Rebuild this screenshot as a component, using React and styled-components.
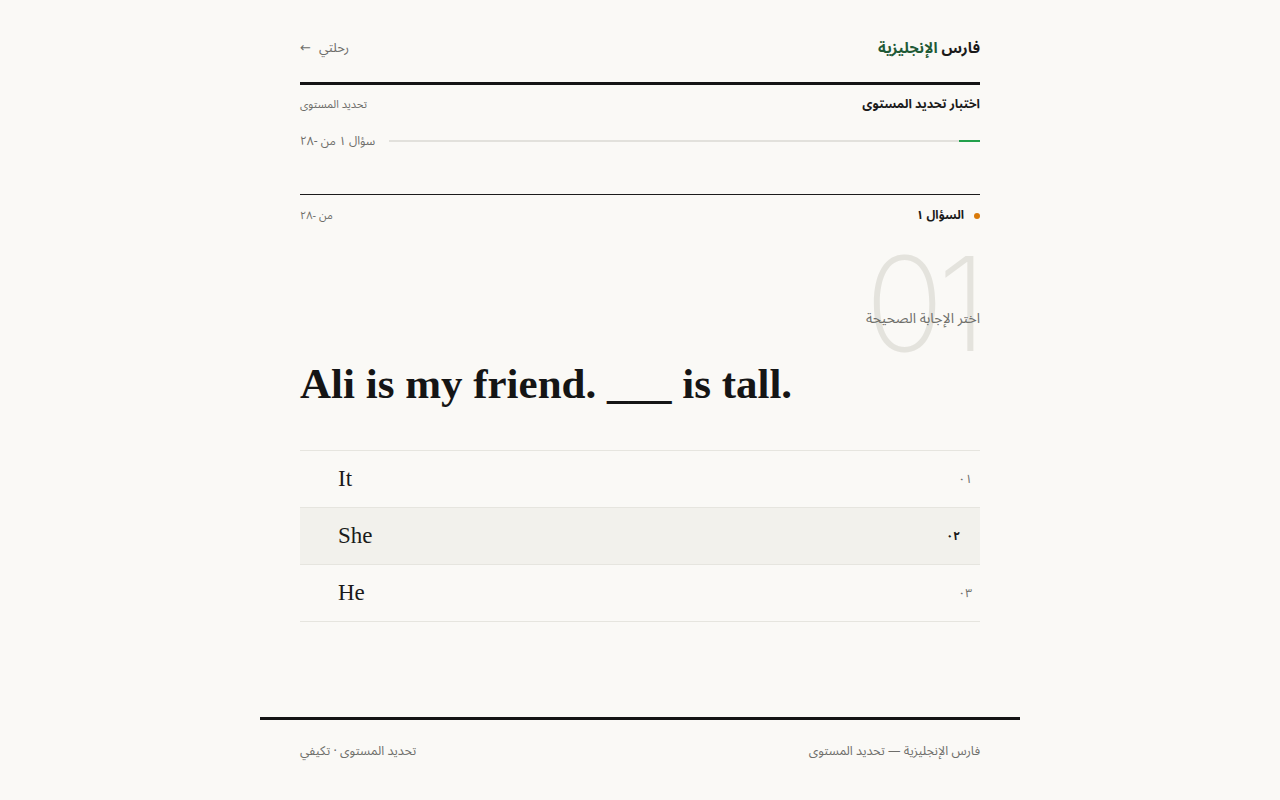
import React from "react";
import styled, { createGlobalStyle } from "styled-components";

const Global = createGlobalStyle`
  html, body { margin: 0; padding: 0; background: #faf9f6; }
  body { font-family: "Noto Sans Arabic", "DejaVu Sans", "Noto Sans", sans-serif; color: #1a1a1a; }
  * { box-sizing: border-box; }
`;

const Page = styled.div`
  direction: rtl;
  min-height: 800px;
  display: flex;
  flex-direction: column;
  align-items: center;
`;

const Container = styled.div`
  width: 680px;
  display: flex;
  flex-direction: column;
`;

const Header = styled.header`
  display: flex;
  align-items: center;
  justify-content: space-between;
  padding-top: 14px;
  border-bottom: 3px solid #141414;
  height: 85px;
`;

const Brand = styled.div`
  font-size: 15px;
  font-weight: 700;
  color: #1a1a1a;
`;

const BrandAccent = styled.span`
  color: #1f5a36;
`;

const BackLink = styled.a`
  font-size: 13px;
  color: #6d6d6a;
  display: flex;
  align-items: center;
  gap: 8px;
  text-decoration: none;
`;

const SubRow = styled.div`
  display: flex;
  justify-content: space-between;
  align-items: center;
  height: 38px;
`;

const TestTitle = styled.div`
  font-size: 12.5px;
  font-weight: 700;
`;

const Small = styled.div`
  font-size: 11px;
  color: #6e6e6a;
`;

const ProgressRow = styled.div`
  display: flex;
  align-items: center;
  gap: 14px;
  height: 36px;
`;

const Track = styled.div`
  flex: 1;
  height: 2px;
  background: #e2e1dc;
  position: relative;
`;

const Fill = styled.div`
  position: absolute;
  top: 0;
  right: 0;
  height: 2px;
  background: #22a04b;
`;

const ProgressLabel = styled.div`
  font-size: 12px;
  color: #6e6e6a;
`;

const MetaRow = styled.div`
  margin-top: 35px;
  border-top: 1px solid #1c1c1c;
  display: flex;
  justify-content: space-between;
  align-items: center;
  height: 42px;
`;

const QLabel = styled.div`
  display: flex;
  align-items: center;
  gap: 10px;
  font-size: 12px;
  font-weight: 700;
`;

const Dot = styled.span`
  width: 6px;
  height: 6px;
  border-radius: 50%;
  background: #d97a0a;
`;

const QuestionArea = styled.div`
  position: relative;
  padding-top: 68px;
`;

const BigNumber = styled.div`
  position: absolute;
  top: 10px;
  left: 0;
  right: 0;
  font-family: Inter, "Noto Sans", sans-serif;
  font-weight: 200;
  font-size: 131px;
  line-height: 0.88;
  color: #e4e3dd;
  direction: ltr;
  letter-spacing: -7px;
  text-align: right;
  z-index: 0;
`;

const Instruction = styled.div`
  position: relative;
  z-index: 1;
  font-size: 14px;
  color: #6e6e6a;
`;

const Prompt = styled.h1`
  position: relative;
  z-index: 1;
  direction: ltr;
  text-align: left;
  margin: 24px 0 0;
  font-family: "Liberation Serif", "DejaVu Serif", serif;
  font-weight: 700;
  font-size: 43px;
  line-height: 54px;
  color: #151515;
`;

const Options = styled.div`
  margin-top: 39px;
  border-top: 1px solid #e6e5df;
`;

const Option = styled.div`
  height: 57px;
  display: flex;
  align-items: center;
  border-bottom: 1px solid #e6e5df;
  background: ${(p) => (p.$active ? "#f2f1ec" : "transparent")};
  padding-right: ${(p) => (p.$active ? 20 : 8)}px;
`;

const OptNum = styled.span`
  font-size: 12px;
  color: ${(p) => (p.$active ? "#1a1a1a" : "#6e6e6a")};
  font-weight: ${(p) => (p.$active ? 700 : 400)};
  width: 20px;
`;

const OptText = styled.span`
  flex: 1;
  direction: ltr;
  text-align: left;
  padding-left: 38px;
  font-family: "Liberation Serif", "DejaVu Serif", serif;
  font-size: 23px;
  color: #1a1a1a;
`;

const Footer = styled.footer`
  margin-top: 95px;
  width: 760px;
  border-top: 3px solid #141414;
  padding: 0 40px;
  height: 64px;
  display: flex;
  align-items: center;
  justify-content: space-between;
  font-size: 12.5px;
  color: #6e6e6a;
`;

const options = [
  { n: "٠١", t: "It" },
  { n: "٠٢", t: "She", active: true },
  { n: "٠٣", t: "He" },
];

export default function App() {
  return (
    <>
      <Global />
      <Page>
        <Container>
          <Header>
            <Brand>
              فارس <BrandAccent>الإنجليزية</BrandAccent>
            </Brand>
            <BackLink>
              <span>رحلتي</span>
              <span>←</span>
            </BackLink>
          </Header>
          <SubRow>
            <TestTitle>اختبار تحديد المستوى</TestTitle>
            <Small>تحديد المستوى</Small>
          </SubRow>
          <ProgressRow>
            <Track>
              <Fill style={{ width: `${(1 / 28) * 100}%` }} />
            </Track>
            <ProgressLabel>سؤال ١ من -٢٨</ProgressLabel>
          </ProgressRow>
          <MetaRow>
            <QLabel>
              <Dot />
              <span>السؤال ١</span>
            </QLabel>
            <Small>من -٢٨</Small>
          </MetaRow>
          <QuestionArea>
            <BigNumber>01</BigNumber>
            <Instruction>اختر الإجابة الصحيحة</Instruction>
            <Prompt>Ali is my friend. ___ is tall.</Prompt>
          </QuestionArea>
          <Options>
            {options.map((o) => (
              <Option key={o.n} $active={o.active}>
                <OptNum $active={o.active}>{o.n}</OptNum>
                <OptText>{o.t}</OptText>
              </Option>
            ))}
          </Options>
        </Container>
        <Footer>
          <span>فارس الإنجليزية — تحديد المستوى</span>
          <span>تحديد المستوى · تكيفي</span>
        </Footer>
      </Page>
    </>
  );
}
